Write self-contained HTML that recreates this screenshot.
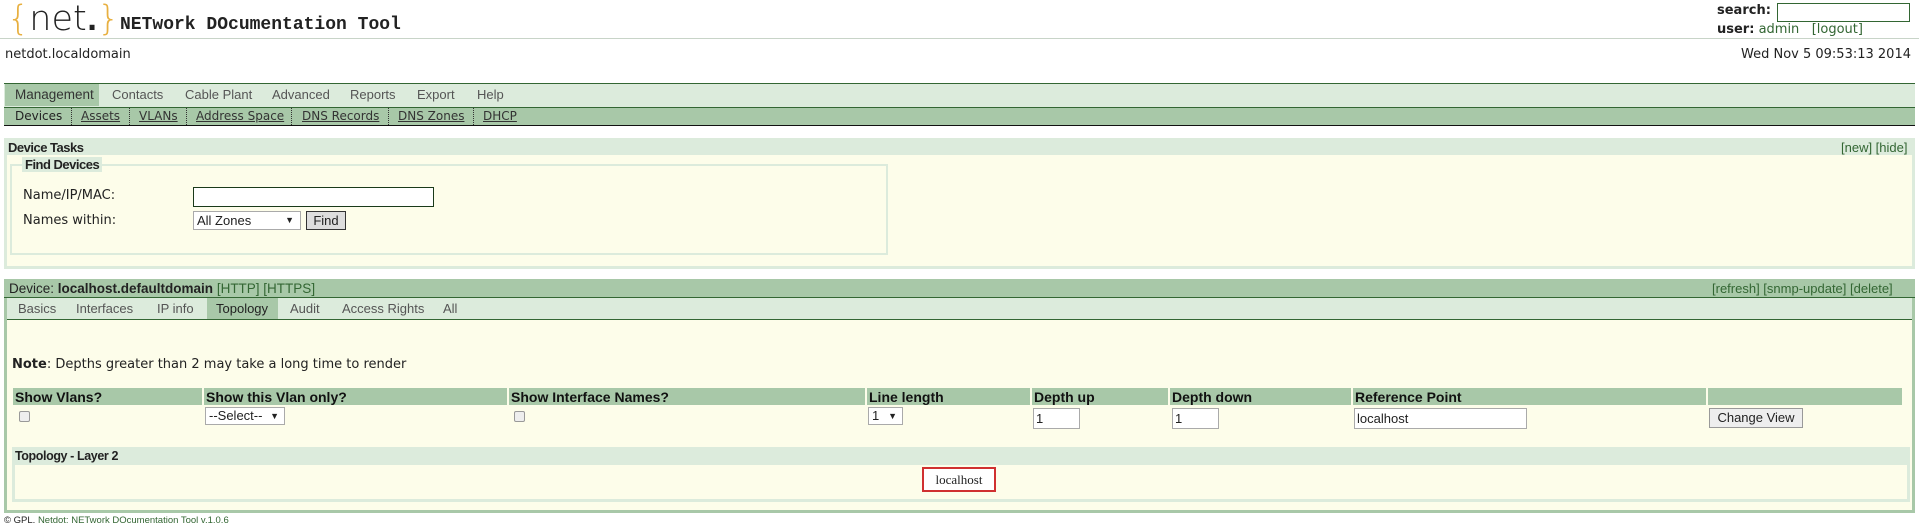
<!DOCTYPE html>
<html><head><meta charset="utf-8"><style>
*{margin:0;padding:0;box-sizing:border-box}
body{width:1919px;height:531px;background:#fff;font-family:"DejaVu Sans","Liberation Sans",sans-serif;font-size:13px;color:#222;position:relative;overflow:hidden}
.a{position:absolute;white-space:nowrap}
.g{color:#336633}
.n{font-family:"Liberation Sans",sans-serif;font-size:13px}
.th{position:absolute;top:388px;height:17px;background:#a8c8a8;font-weight:bold;font-family:"Liberation Sans",sans-serif;font-size:14px;padding:1px 2px;color:#111}
.inp{position:absolute;background:#fff;border:1px solid #aaa;font-family:"Liberation Sans",sans-serif;font-size:13px;padding:2px 2px}
</style></head><body>
<div class="a" style="left:7px;top:-1px;font-size:35px;font-family:'DejaVu Sans',sans-serif;font-weight:200;line-height:40px"><span style="color:#e8b040">{</span><span style="color:#222">net<span style="font-weight:bold;font-size:28px">.</span></span><span style="color:#e8b040">}</span></div>
<div class="a" style="left:120px;top:15px;font-family:'Liberation Mono',monospace;font-weight:bold;font-size:18px">NETwork DOcumentation Tool</div>
<div class="a" style="left:0;top:38px;width:1919px;height:1px;background:#c8d4c8"></div>
<div class="a" style="left:1717px;top:3px;font-weight:bold;font-size:13px">search:</div>
<div class="a" style="left:1777px;top:3px;width:133px;height:19px;border:1px solid #336633;background:#fff"></div>
<div class="a" style="left:1717px;top:22px;font-size:13px"><b>user:</b> <span class="g">admin</span> &nbsp; <span class="g">[logout]</span></div>
<div class="a" style="left:5px;top:47px;font-size:13px">netdot.localdomain</div>
<div class="a" style="left:1741px;top:47px;font-size:13px">Wed Nov 5 09:53:13 2014</div>

<div class="a" style="left:4px;top:83px;width:1911px;height:24px;background:#dcebdc;border-top:1px solid #336633"></div>
<div class="a" style="left:5px;top:84px;width:94px;height:22px;background:#a8c8a8"></div>
<div class="a n" style="top:87px;left:15px;color:#333;font-size:13.5px">Management</div>
<div class="a n" style="top:87px;left:112px;color:#555">Contacts</div>
<div class="a n" style="top:87px;left:185px;color:#555">Cable Plant</div>
<div class="a n" style="top:87px;left:272px;color:#555">Advanced</div>
<div class="a n" style="top:87px;left:350px;color:#555">Reports</div>
<div class="a n" style="top:87px;left:417px;color:#555">Export</div>
<div class="a n" style="top:87px;left:477px;color:#555">Help</div>
<div class="a" style="left:4px;top:107px;width:1911px;height:19px;background:#a8c8a8;border-top:1px solid #336633;border-bottom:1px solid #111"></div>
<div class="a" style="top:109px;left:15px;font-size:12px;color:#222">Devices</div>
<div class="a" style="top:109px;left:81px;font-size:12px;color:#333;text-decoration:underline">Assets</div>
<div class="a" style="top:109px;left:139px;font-size:12px;color:#333;text-decoration:underline">VLANs</div>
<div class="a" style="top:109px;left:196px;font-size:12px;color:#333;text-decoration:underline">Address Space</div>
<div class="a" style="top:109px;left:302px;font-size:12px;color:#333;text-decoration:underline">DNS Records</div>
<div class="a" style="top:109px;left:398px;font-size:12px;color:#333;text-decoration:underline">DNS Zones</div>
<div class="a" style="top:109px;left:483px;font-size:12px;color:#333;text-decoration:underline">DHCP</div>
<div class="a" style="left:71px;top:108px;height:17px;border-left:1px dotted #333"></div>
<div class="a" style="left:129px;top:108px;height:17px;border-left:1px dotted #333"></div>
<div class="a" style="left:186px;top:108px;height:17px;border-left:1px dotted #333"></div>
<div class="a" style="left:291px;top:108px;height:17px;border-left:1px dotted #333"></div>
<div class="a" style="left:388px;top:108px;height:17px;border-left:1px dotted #333"></div>
<div class="a" style="left:473px;top:108px;height:17px;border-left:1px dotted #333"></div>

<div class="a" style="left:4px;top:138px;width:1911px;height:131px;background:#fdfdea;border:3px solid #dcebdc"></div>
<div class="a" style="left:4px;top:138px;width:1911px;height:17px;background:#dcebdc"></div>
<div class="a n" style="left:8px;top:140px;font-weight:bold;letter-spacing:-0.5px">Device Tasks</div>
<div class="a n g" style="left:1841px;top:140px">[new] [hide]</div>
<div class="a" style="left:10px;top:164px;width:878px;height:91px;border:2px solid #dcebdc"></div>
<div class="a n" style="left:22px;top:157px;background:#dcebdc;font-weight:bold;padding:0 3px;letter-spacing:-0.5px">Find Devices</div>
<div class="a" style="left:23px;top:188px;font-size:13px">Name/IP/MAC:</div>
<div class="a" style="left:23px;top:213px;font-size:13px">Names within:</div>
<div class="a" style="left:193px;top:187px;width:241px;height:20px;border:1px solid #1a3a1a;background:#fff"></div>
<div class="a inp" style="left:193px;top:211px;width:108px;height:19px;padding:1px 3px">All Zones<span style="position:absolute;right:6px;font-size:9px;top:3px">▼</span></div>
<div class="a" style="left:306px;top:211px;width:40px;height:19px;border:1px solid #333;background:#ddd;font-family:'Liberation Sans',sans-serif;font-size:13px;text-align:center;line-height:17px">Find</div>

<div class="a" style="left:4px;top:279px;width:1911px;height:234px;background:#fdfdea;border:3px solid #a8c8a8;border-top:0"></div>
<div class="a" style="left:4px;top:279px;width:1911px;height:19px;background:#a8c8a8;border-bottom:1px solid #336633"></div>
<div class="a n" style="left:9px;top:281px;font-size:13.5px">Device: <b>localhost.defaultdomain</b> <span class="g">[HTTP] [HTTPS]</span></div>
<div class="a n g" style="left:1712px;top:281px">[refresh] [snmp-update] [delete]</div>
<div class="a" style="left:7px;top:298px;width:1905px;height:22px;background:#dcebdc;border-bottom:1px solid #336633"></div>
<div class="a" style="left:207px;top:298px;width:71px;height:21px;background:#a8c8a8"></div>
<div class="a n" style="top:301px;left:18px;color:#555">Basics</div>
<div class="a n" style="top:301px;left:76px;color:#555">Interfaces</div>
<div class="a n" style="top:301px;left:157px;color:#555">IP info</div>
<div class="a n" style="top:301px;left:216px;color:#222">Topology</div>
<div class="a n" style="top:301px;left:290px;color:#555">Audit</div>
<div class="a n" style="top:301px;left:342px;color:#555">Access Rights</div>
<div class="a n" style="top:301px;left:443px;color:#555">All</div>
<div class="a" style="left:12px;top:357px;font-size:13px"><b>Note</b>: Depths greater than 2 may take a long time to render</div>
<div class="th" style="left:13px;width:189px">Show Vlans?</div>
<div class="th" style="left:204px;width:303px">Show this Vlan only?</div>
<div class="th" style="left:509px;width:356px">Show Interface Names?</div>
<div class="th" style="left:867px;width:163px">Line length</div>
<div class="th" style="left:1032px;width:136px">Depth up</div>
<div class="th" style="left:1170px;width:181px">Depth down</div>
<div class="th" style="left:1353px;width:353px">Reference Point</div>
<div class="th" style="left:1708px;width:194px"></div>
<div class="a" style="left:19px;top:411px;width:11px;height:11px;border:1px solid #999;border-radius:2px;background:#eee"></div>
<div class="a" style="left:514px;top:411px;width:11px;height:11px;border:1px solid #999;border-radius:2px;background:#eee"></div>
<div class="a inp" style="left:205px;top:407px;width:80px;height:18px;padding:0 3px">--Select--<span style="position:absolute;right:5px;font-size:9px;top:3px">▼</span></div>
<div class="a inp" style="left:868px;top:407px;width:35px;height:18px;padding:0 3px">1<span style="position:absolute;right:5px;font-size:9px;top:3px">▼</span></div>
<div class="a inp" style="left:1033px;top:408px;width:47px;height:21px">1</div>
<div class="a inp" style="left:1172px;top:408px;width:47px;height:21px">1</div>
<div class="a inp" style="left:1354px;top:408px;width:173px;height:21px">localhost</div>
<div class="a" style="left:1709px;top:408px;width:94px;height:20px;border:1px solid #999;background:#eee;font-family:'Liberation Sans',sans-serif;font-size:13px;text-align:center;line-height:18px">Change View</div>
<div class="a" style="left:12px;top:447px;width:1898px;height:55px;border:3px solid #dcebdc;background:#fdfdea"></div>
<div class="a" style="left:12px;top:447px;width:1898px;height:18px;background:#dcebdc"></div>
<div class="a n" style="left:15px;top:449px;font-weight:bold;font-size:12.5px;letter-spacing:-0.4px">Topology - Layer 2</div>
<div class="a" style="left:922px;top:467px;width:74px;height:25px;border:2px solid #d03030;background:#fff;font-family:'Liberation Serif',serif;font-size:13px;text-align:center;line-height:21px">localhost</div>
<div class="a" style="left:4px;top:515px;font-size:9.5px;font-family:'Liberation Sans',sans-serif">© GPL. <span class="g">Netdot: NETwork DOcumentation Tool v.1.0.6</span></div>
</body></html>
